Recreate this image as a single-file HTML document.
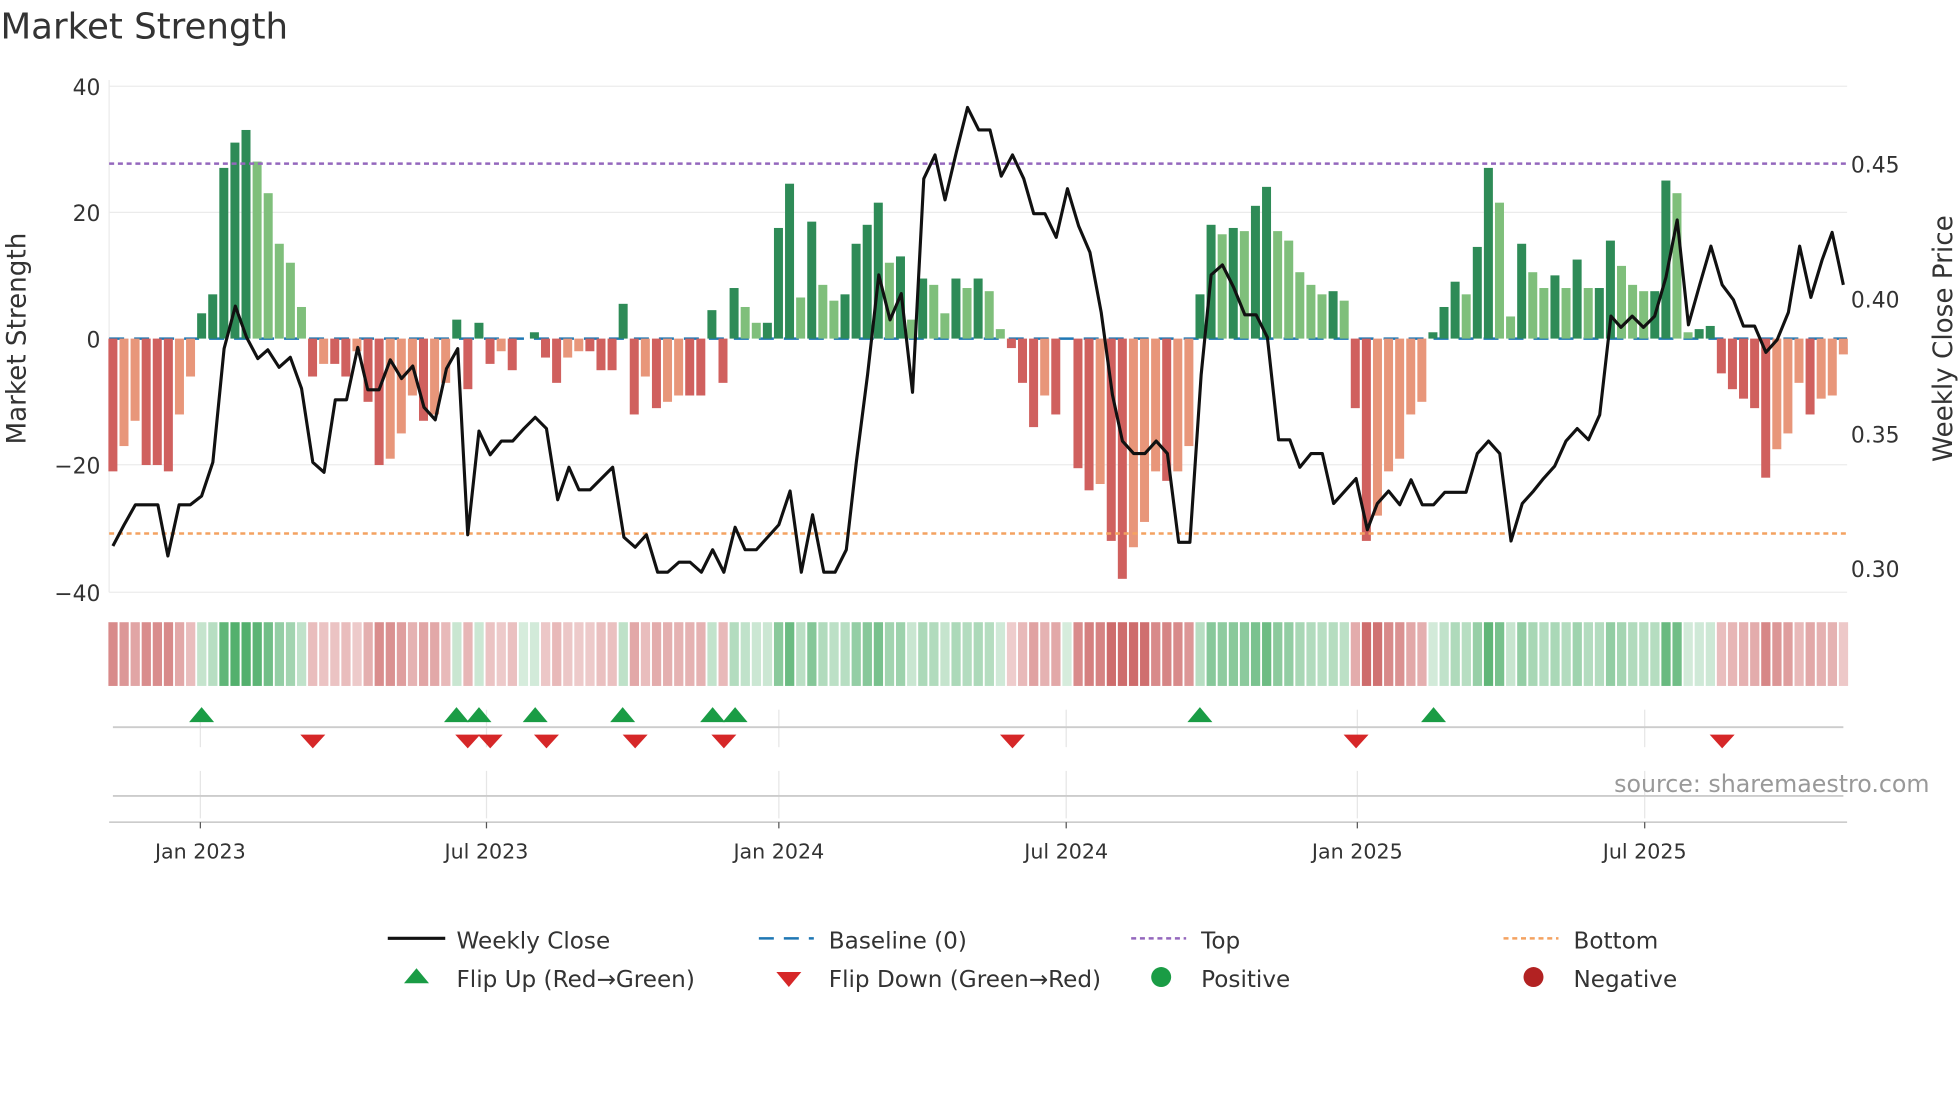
<!DOCTYPE html>
<html><head><meta charset="utf-8"><style>
html,body{margin:0;padding:0;background:#fff;}
svg{display:block;font-family:"DejaVu Sans","Liberation Sans",sans-serif;}
</style></head><body>
<svg id="s" width="1960" height="1102" viewBox="0 0 1568 882" xmlns="http://www.w3.org/2000/svg">
<rect width="1568" height="882" fill="#fff"/>
<text x="0" y="31" font-size="28.5" fill="#333">Market Strength</text>
<g stroke="#ebebeb" stroke-width="1">
<line x1="87" y1="69" x2="1478" y2="69"/><line x1="87" y1="170" x2="1478" y2="170"/><line x1="87" y1="372" x2="1478" y2="372"/><line x1="87" y1="474" x2="1478" y2="474"/>
<line x1="87" y1="64" x2="87" y2="474"/>
</g>
<g font-size="17.5" fill="#333" text-anchor="end">
<text x="80" y="76">40</text><text x="80" y="177">20</text><text x="80" y="278">0</text><text x="80" y="379">−20</text><text x="80" y="481">−40</text>
</g>
<g font-size="17.5" fill="#333">
<text x="1481" y="138">0.45</text><text x="1481" y="246">0.40</text><text x="1481" y="354">0.35</text><text x="1481" y="462">0.30</text>
</g>
<text transform="translate(20,271) rotate(-90)" font-size="21" fill="#333" text-anchor="middle">Market Strength</text>
<text transform="translate(1562,271) rotate(-90)" font-size="21" fill="#333" text-anchor="middle">Weekly Close Price</text>
<line x1="87" y1="271" x2="1478" y2="271" stroke="#1f77b4" stroke-width="2" stroke-dasharray="12,8"/>
<g id="bars"></g>
<line x1="87" y1="131" x2="1478" y2="131" stroke="#9467bd" stroke-width="2" stroke-dasharray="4,3"/>
<line x1="87" y1="427" x2="1478" y2="427" stroke="#f4a261" stroke-width="2" stroke-dasharray="4,3"/>
<polyline id="price" fill="none" stroke="#111" stroke-width="2.5" stroke-linejoin="round"/>
<g id="heat"></g>
<g stroke="#e6e6e6" stroke-width="1">
<line x1="160" y1="568" x2="160" y2="598"/><line x1="389" y1="568" x2="389" y2="598"/><line x1="623" y1="568" x2="623" y2="598"/><line x1="853" y1="568" x2="853" y2="598"/><line x1="1086" y1="568" x2="1086" y2="598"/><line x1="1316" y1="568" x2="1316" y2="598"/>
<line x1="160" y1="617" x2="160" y2="655"/><line x1="389" y1="617" x2="389" y2="655"/><line x1="623" y1="617" x2="623" y2="655"/><line x1="853" y1="617" x2="853" y2="655"/><line x1="1086" y1="617" x2="1086" y2="655"/><line x1="1316" y1="617" x2="1316" y2="655"/>
</g>
<line x1="90" y1="582" x2="1475" y2="582" stroke="#ccc" stroke-width="1.5"/>
<line x1="90" y1="637" x2="1475" y2="637" stroke="#ccc" stroke-width="1.5"/>
<line x1="87" y1="658" x2="1478" y2="658" stroke="#bbb" stroke-width="1"/>
<g id="marks"></g>
<text x="1544" y="634" font-size="19" fill="#999" text-anchor="end">source: sharemaestro.com</text>
<g stroke="#555" stroke-width="1"><line x1="160" y1="658" x2="160" y2="663"/><line x1="389" y1="658" x2="389" y2="663"/><line x1="623" y1="658" x2="623" y2="663"/><line x1="853" y1="658" x2="853" y2="663"/><line x1="1086" y1="658" x2="1086" y2="663"/><line x1="1316" y1="658" x2="1316" y2="663"/></g>
<g font-size="16.5" fill="#333" text-anchor="middle">
<text x="160" y="687">Jan 2023</text><text x="389" y="687">Jul 2023</text><text x="623" y="687">Jan 2024</text><text x="853" y="687">Jul 2024</text><text x="1086" y="687">Jan 2025</text><text x="1316" y="687">Jul 2025</text>
</g>
<g font-size="18.5" fill="#333">
<line x1="310" y1="751" x2="356" y2="751" stroke="#111" stroke-width="2.5"/><text x="365" y="759">Weekly Close</text>
<line x1="607" y1="751" x2="651" y2="751" stroke="#1f77b4" stroke-width="2" stroke-dasharray="12,8"/><text x="663" y="759">Baseline (0)</text>
<line x1="905" y1="751" x2="949" y2="751" stroke="#9467bd" stroke-width="2" stroke-dasharray="4,3"/><text x="961" y="759">Top</text>
<line x1="1203" y1="751" x2="1247" y2="751" stroke="#f4a261" stroke-width="2" stroke-dasharray="4,3"/><text x="1259" y="759">Bottom</text>
<polygon points="323,787 333,775 343,787" fill="#1a9c45"/><text x="365" y="790">Flip Up (Red→Green)</text>
<polygon points="621,778 641,778 631,790" fill="#d62728"/><text x="663" y="790">Flip Down (Green→Red)</text>
<circle cx="929" cy="782" r="8" fill="#1a9c45"/><text x="961" y="790">Positive</text>
<circle cx="1227" cy="782" r="8" fill="#b22222"/><text x="1259" y="790">Negative</text>
</g>
</svg>
<script>
var V=[-21,-17,-13,-20,-20,-21,-12,-6,4,7,27,31,33,28,23,15,12,5,-6,-4,-4,-6,-2,-10,-20,-19,-15,-9,-13,-12,-7,3,-8,2.5,-4,-2,-5,0,1,-3,-7,-3,-2,-2,-5,-5,5.5,-12,-6,-11,-10,-9,-9,-9,4.5,-7,8,5,2.5,2.5,17.5,24.5,6.5,18.5,8.5,6,7,15,18,21.5,12,13,3,9.5,8.5,4,9.5,8,9.5,7.5,1.5,-1.5,-7,-14,-9,-12,0,-20.5,-24,-23,-32,-38,-33,-29,-21,-22.5,-21,-17,7,18,16.5,17.5,17,21,24,17,15.5,10.5,8.5,7,7.5,6,-11,-32,-28,-21,-19,-12,-10,1,5,9,7,14.5,27,21.5,3.5,15,10.5,8,10,8,12.5,8,8,15.5,11.5,8.5,7.5,7.5,25,23,1,1.5,2,-5.5,-8,-9.5,-11,-22,-17.5,-15,-7,-12,-9.5,-9,-2.5];
var P="90,437 99,420 108,404 117,404 126,404 134,445 143,404 152,404 161,397 170,370 179,279 188,245 197,270 206,287 214,280 223,294 232,286 241,311 250,370 259,378 268,320 277,320 286,278 294,312 303,312 312,288 321,303 330,293 339,326 348,336 357,295 366,279 374,428 383,345 392,364 401,353 410,353 419,343 428,334 437,343 446,400 455,374 463,392 472,392 481,383 490,374 499,430 508,438 517,428 526,458 534,458 543,450 552,450 561,458 570,440 579,458 588,422 596,440 605,440 614,430 623,420 632,393 641,458 650,412 659,458 668,458 677,440 685,370 694,300 703,220 712,256 721,235 730,314 739,143 748,124 756,160 765,122 774,86 783,104 792,104 801,141 810,124 819,143 827,171 836,171 845,190 854,151 863,181 872,202 881,250 890,316 898,353 907,363 916,363 925,353 934,363 943,434 952,434 961,300 969,220 978,212 987,230 996,252 1005,252 1014,270 1023,352 1032,352 1040,374 1049,363 1058,363 1067,403 1076,393 1085,383 1094,424 1102,403 1111,393 1120,404 1129,384 1138,404 1147,404 1156,394 1165,394 1173,394 1182,363 1191,353 1200,363 1209,433 1218,403 1227,393 1235,383 1244,373 1253,353 1262,343 1271,352 1280,332 1289,253 1297,262 1306,253 1315,262 1324,253 1333,222 1342,176 1351,260 1360,228 1369,197 1378,228 1387,240 1395,261 1404,261 1413,282 1422,272 1431,250 1440,197 1449,238 1458,208 1466,186 1475,228";
document.getElementById('price').setAttribute('points',P);
var ns="http://www.w3.org/2000/svg",b=document.getElementById('bars'),h=document.getElementById('heat'),m=document.getElementById('marks');
function R(g,x,y,w,hh,f){var r=document.createElementNS(ns,'rect');r.setAttribute('x',x);r.setAttribute('y',y);r.setAttribute('width',w);r.setAttribute('height',hh);r.setAttribute('fill',f);g.appendChild(r);}
function mix(a,c,t){var o=[];for(var i=0;i<3;i++)o.push(Math.round(a[i]+(c[i]-a[i])*t));return 'rgb('+o.join(',')+')';}
var step=(1475-90)/(V.length-1);
for(var i=0;i<V.length;i++){
 var v=V[i],x=90+i*step,prev=i>0?V[i-1]:v;
 var col;
 if(v>=0){col=(v>=prev)?'#2e8b57':'#7fbf7b';}else{col=(v<=prev)?'#d0605e':'#e8967a';}
 if(v!==0){var y0=271,y1=271-v*5.06;R(b,x-3.6,Math.min(y0,y1),7.2,Math.abs(y1-y0),col);}
 var t=Math.min(1,Math.abs(v)/30)*0.75+0.12;
 var hc=v>=0?mix([235,246,238],[60,165,90],t):mix([245,225,225],[200,90,90],t);
 R(h,x-3.6,498,7.4,51,hc);
}
var up=[161,365,383,428,498,570,588,960,1147],dn=[250,374,392,437,508,579,810,1085,1378];
function T(x,y,pts,f){var p=document.createElementNS(ns,'polygon');p.setAttribute('points',pts);p.setAttribute('fill',f);m.appendChild(p);}
up.forEach(function(x){T(x,0,(x-10)+',578 '+x+',566 '+(x+10)+',578','#1a9c45');});
dn.forEach(function(x){T(x,0,(x-10)+',588 '+(x+10)+',588 '+x+',599','#d62728');});
</script>
</body></html>
